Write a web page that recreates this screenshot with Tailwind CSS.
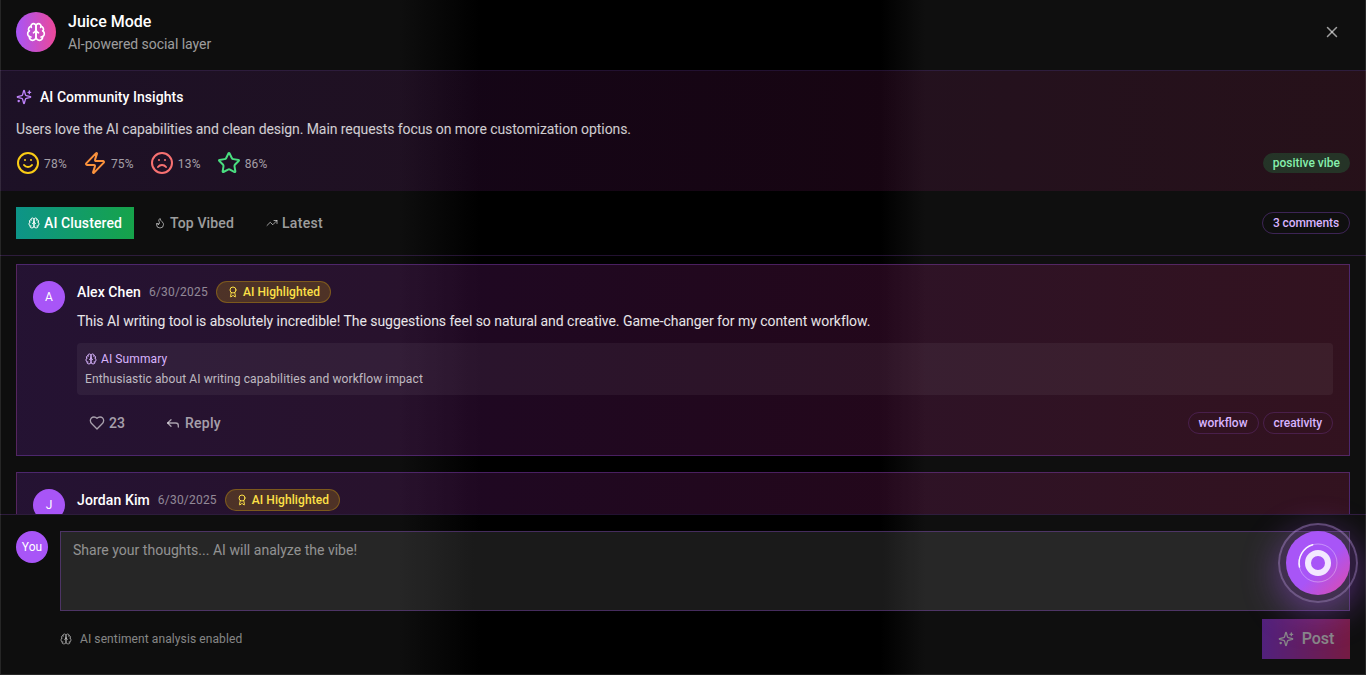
<!DOCTYPE html>
<html>
<head>
<meta charset="utf-8">
<script src="https://cdn.jsdelivr.net/npm/@tailwindcss/browser@4"></script>
</head>
<body class="m-0 bg-black">
<svg width="0" height="0" class="absolute">
  <defs>
    <symbol id="brain" viewBox="0 0 24 24"><path d="M12 5a3 3 0 1 0-5.997.125 4 4 0 0 0-2.526 5.77 4 4 0 0 0 .556 6.588A4 4 0 1 0 12 18Z"/><path d="M12 5a3 3 0 1 1 5.997.125 4 4 0 0 1 2.526 5.77 4 4 0 0 1-.556 6.588A4 4 0 1 1 12 18Z"/><path d="M15 13a4.5 4.5 0 0 1-3-4 4.5 4.5 0 0 1-3 4"/><path d="M17.599 6.5a3 3 0 0 0 .399-1.375"/><path d="M6.003 5.125A3 3 0 0 0 6.401 6.5"/><path d="M3.477 10.896a4 4 0 0 1 .585-.396"/><path d="M19.938 10.5a4 4 0 0 1 .585.396"/><path d="M6 18a4 4 0 0 1-1.967-.516"/><path d="M19.967 17.484A4 4 0 0 1 18 18"/></symbol>
    <symbol id="sparkles" viewBox="0 0 24 24"><path d="M9.937 15.5A2 2 0 0 0 8.5 14.063l-6.135-1.582a.5.5 0 0 1 0-.962L8.5 9.936A2 2 0 0 0 9.937 8.5l1.582-6.135a.5.5 0 0 1 .963 0L14.063 8.5A2 2 0 0 0 15.5 9.937l6.135 1.581a.5.5 0 0 1 0 .964L15.5 14.063a2 2 0 0 0-1.437 1.437l-1.582 6.135a.5.5 0 0 1-.963 0z"/><path d="M20 3v4"/><path d="M22 5h-4"/><path d="M4 17v2"/><path d="M5 18H3"/></symbol>
    <symbol id="award" viewBox="0 0 24 24"><path d="m15.477 12.89 1.515 8.526a.5.5 0 0 1-.81.47l-3.58-2.687a1 1 0 0 0-1.197 0l-3.586 2.686a.5.5 0 0 1-.81-.469l1.514-8.526"/><circle cx="12" cy="8" r="6"/></symbol>
  </defs>
</svg>

<div class="relative w-[1366px] h-[675px] overflow-hidden bg-[linear-gradient(90deg,#0e0e0e_0,#0e0e0e_400px,#000_480px,#000_880px,#0f0f0f_925px,#0f0f0f_100%)] text-white font-['Roboto',sans-serif] flex flex-col">

  <!-- Header -->
  <header class="flex items-center justify-between px-4 pt-3 pb-[18px] border-b border-[#a855f7]/20 shrink-0">
    <div class="flex items-center gap-3 h-10">
      <div class="w-10 h-10 rounded-full bg-linear-to-r/srgb from-[#a855f7] to-[#ec4899] flex items-center justify-center">
        <svg class="w-5 h-5" fill="none" stroke="white" stroke-width="2" stroke-linecap="round" stroke-linejoin="round"><use href="#brain"/></svg>
      </div>
      <div class="flex flex-col pb-px">
        <div class="text-base leading-6 font-medium">Juice Mode</div>
        <div class="text-sm leading-5 text-white/60 tracking-[-0.04px]">AI-powered social layer</div>
      </div>
    </div>
    <button class="w-[18px] h-[18px] mr-[9px] text-white/60">
      <svg class="w-[18px] h-[18px]" viewBox="0 0 24 24" fill="none" stroke="currentColor" stroke-width="2" stroke-linecap="round" stroke-linejoin="round"><path d="M18 6 6 18"/><path d="m6 6 12 12"/></svg>
    </button>
  </header>

  <!-- Insights -->
  <section class="p-4 bg-linear-to-r/srgb from-[#581c87]/20 to-[#831843]/20 shrink-0">
    <div class="flex items-center gap-2 mb-3 h-5">
      <svg class="w-4 h-4 text-[#c084fc]" fill="none" stroke="currentColor" stroke-width="2" stroke-linecap="round" stroke-linejoin="round"><use href="#sparkles"/></svg>
      <span class="text-sm leading-5 font-medium tracking-[0.05px]">AI Community Insights</span>
    </div>
    <p class="text-sm leading-5 text-white/80 mb-3 tracking-[-0.08px]">Users love the AI capabilities and clean design. Main requests focus on more customization options.</p>
    <div class="flex items-center justify-between h-6">
      <div class="flex items-center gap-4">
        <div class="flex items-center gap-1">
          <svg class="w-6 h-6 text-[#facc15]" viewBox="0 0 24 24" fill="none" stroke="currentColor" stroke-width="2" stroke-linecap="round" stroke-linejoin="round"><circle cx="12" cy="12" r="10"/><path d="M8 14s1.5 2 4 2 4-2 4-2"/><path d="M9 9h.01"/><path d="M15 9h.01"/></svg>
          <span class="text-xs text-white/60 tracking-[0.2px] mt-0.5">78%</span>
        </div>
        <div class="flex items-center gap-1">
          <svg class="w-6 h-6 text-[#fb923c]" viewBox="0 0 24 24" fill="none" stroke="currentColor" stroke-width="2" stroke-linecap="round" stroke-linejoin="round"><path d="M4 14a1 1 0 0 1-.78-1.63l9.9-10.2a.5.5 0 0 1 .86.46l-1.92 6.02A1 1 0 0 0 13 10h7a1 1 0 0 1 .78 1.63l-9.9 10.2a.5.5 0 0 1-.86-.46l1.92-6.02A1 1 0 0 0 11 14z"/></svg>
          <span class="text-xs text-white/60 tracking-[0.2px] mt-0.5">75%</span>
        </div>
        <div class="flex items-center gap-1">
          <svg class="w-6 h-6 text-[#f87171]" viewBox="0 0 24 24" fill="none" stroke="currentColor" stroke-width="2" stroke-linecap="round" stroke-linejoin="round"><circle cx="12" cy="12" r="10"/><path d="M16 16s-1.5-2-4-2-4 2-4 2"/><path d="M9 9h.01"/><path d="M15 9h.01"/></svg>
          <span class="text-xs text-white/60 tracking-[0.2px] mt-0.5">13%</span>
        </div>
        <div class="flex items-center gap-1">
          <svg class="w-6 h-6 text-[#4ade80]" viewBox="0 0 24 24" fill="none" stroke="currentColor" stroke-width="2" stroke-linecap="round" stroke-linejoin="round"><path d="M11.525 2.295a.53.53 0 0 1 .95 0l2.31 4.679a2.123 2.123 0 0 0 1.595 1.16l5.166.756a.53.53 0 0 1 .294.904l-3.736 3.638a2.123 2.123 0 0 0-.611 1.878l.882 5.14a.53.53 0 0 1-.771.56l-4.618-2.428a2.122 2.122 0 0 0-1.973 0L6.396 21.01a.53.53 0 0 1-.77-.56l.881-5.139a2.122 2.122 0 0 0-.611-1.879L2.16 9.795a.53.53 0 0 1 .294-.906l5.165-.755a2.122 2.122 0 0 0 1.597-1.16z"/></svg>
          <span class="text-xs text-white/60 tracking-[0.2px] mt-0.5">86%</span>
        </div>
      </div>
      <span class="rounded-full bg-[#22c55e]/20 text-[#86efac] text-xs leading-4 font-medium px-2.5 py-0.5">positive vibe</span>
    </div>
  </section>

  <!-- Tabs -->
  <nav class="flex items-center justify-between px-4 py-4 border-b border-[#a855f7]/20 shrink-0">
    <div class="flex items-center gap-2">
      <button class="h-8 px-3 flex items-center gap-1 text-sm font-medium text-white tracking-[0.1px] bg-linear-to-r/srgb from-[#0d9488] to-[#16a34a]">
        <svg class="w-3 h-3" fill="none" stroke="currentColor" stroke-width="2" stroke-linecap="round" stroke-linejoin="round"><use href="#brain"/></svg>
        AI Clustered
      </button>
      <button class="h-8 px-3 flex items-center gap-1 text-sm font-medium text-white/60 tracking-[0.14px]">
        <svg class="w-3 h-3" viewBox="0 0 24 24" fill="none" stroke="currentColor" stroke-width="2" stroke-linecap="round" stroke-linejoin="round"><path d="M8.5 14.5A2.5 2.5 0 0 0 11 12c0-1.38-.5-2-1-3-1.072-2.143-.224-4.054 2-6 .5 2.5 2 4.9 4 6.5 2 1.6 3 3.5 3 5.5a7 7 0 1 1-14 0c0-1.153.433-2.294 1-3a2.5 2.5 0 0 0 2.5 2.5z"/></svg>
        Top Vibed
      </button>
      <button class="h-8 px-3 flex items-center gap-1 text-sm font-medium text-white/60 tracking-[0.3px]">
        <svg class="w-3 h-3" viewBox="0 0 24 24" fill="none" stroke="currentColor" stroke-width="2" stroke-linecap="round" stroke-linejoin="round"><path d="M22 7 13.5 15.5 8.5 10.5 2 17"/><path d="M16 7h6v6"/></svg>
        Latest
      </button>
    </div>
    <span class="rounded-full border border-[#a855f7]/30 text-[#d8b4fe] text-xs leading-4 font-medium px-2.5 py-0.5 tracking-[-0.1px]">3 comments</span>
  </nav>

  <!-- Comments -->
  <main class="flex-1 min-h-0 overflow-hidden px-4 pt-2 flex flex-col gap-4">
    <article class="shrink-0 border border-[#a855f7]/30 bg-linear-to-r/srgb from-[#581c87]/30 to-[#831843]/30 p-4 flex gap-3">
      <div class="w-8 h-8 shrink-0 rounded-full bg-[#a855f7] flex items-center justify-center text-xs">A</div>
      <div class="flex-1 min-w-0">
        <div class="flex items-center gap-2 mb-2 h-[22px]">
          <span class="text-sm font-medium tracking-[0.1px]">Alex Chen</span>
          <span class="text-xs text-white/50 tracking-[0.2px]">6/30/2025</span>
          <span class="flex items-center gap-1 rounded-full border border-[#eab308]/30 bg-[#eab308]/20 text-[#fde047] text-xs leading-4 font-medium px-2.5 py-0.5 tracking-[0.08px]">
            <svg class="w-3 h-3" fill="none" stroke="currentColor" stroke-width="2" stroke-linecap="round" stroke-linejoin="round"><use href="#award"/></svg>
            AI Highlighted
          </span>
        </div>
        <p class="text-sm leading-5 text-white/90 mb-3 tracking-[-0.04px]">This AI writing tool is absolutely incredible! The suggestions feel so natural and creative. Game-changer for my content workflow.</p>
        <div class="rounded bg-white/5 p-2 mb-3">
          <div class="flex items-center gap-1 mb-1 text-xs leading-4 text-[#d8b4fe] tracking-[0.1px]">
            <svg class="w-3 h-3" fill="none" stroke="currentColor" stroke-width="2" stroke-linecap="round" stroke-linejoin="round"><use href="#brain"/></svg>
            AI Summary
          </div>
          <p class="text-xs leading-4 text-white/70 tracking-[0.11px]">Enthusiastic about AI writing capabilities and workflow impact</p>
        </div>
        <div class="flex items-center justify-between h-8">
          <div class="flex items-center gap-4">
            <button class="h-8 px-3 flex items-center gap-1 text-sm font-medium text-white/60">
              <svg class="w-4 h-4" viewBox="0 0 24 24" fill="none" stroke="currentColor" stroke-width="2" stroke-linecap="round" stroke-linejoin="round"><path d="M19 14c1.49-1.46 3-3.21 3-5.5A5.5 5.5 0 0 0 16.5 3c-1.76 0-3 .5-4.5 2-1.5-1.5-2.74-2-4.5-2A5.5 5.5 0 0 0 2 8.5c0 2.3 1.5 4.05 3 5.5l7 7Z"/></svg>
              23
            </button>
            <button class="h-8 px-3 flex items-center gap-1 text-sm font-medium text-white/60 tracking-[0.3px]">
              <svg class="w-4 h-4" viewBox="0 0 24 24" fill="none" stroke="currentColor" stroke-width="2" stroke-linecap="round" stroke-linejoin="round"><polyline points="9 17 4 12 9 7"/><path d="M20 18v-2a4 4 0 0 0-4-4H4"/></svg>
              Reply
            </button>
          </div>
          <div class="flex items-center gap-1">
            <span class="rounded-full border border-[#a855f7]/20 text-[#d8b4fe] text-xs leading-4 font-medium px-2.5 py-0.5">workflow</span>
            <span class="rounded-full border border-[#a855f7]/20 text-[#d8b4fe] text-xs leading-4 font-medium px-2.5 py-0.5 tracking-[-0.08px]">creativity</span>
          </div>
        </div>
      </div>
    </article>

    <article class="shrink-0 h-[192px] border border-[#a855f7]/30 bg-linear-to-r/srgb from-[#581c87]/30 to-[#831843]/30 p-4 flex gap-3">
      <div class="w-8 h-8 shrink-0 rounded-full bg-[#a855f7] flex items-center justify-center text-xs">J</div>
      <div class="flex-1 min-w-0">
        <div class="flex items-center gap-2 h-[22px]">
          <span class="text-sm font-medium tracking-[0.1px]">Jordan Kim</span>
          <span class="text-xs text-white/50 tracking-[0.2px]">6/30/2025</span>
          <span class="flex items-center gap-1 rounded-full border border-[#eab308]/30 bg-[#eab308]/20 text-[#fde047] text-xs leading-4 font-medium px-2.5 py-0.5 tracking-[0.08px]">
            <svg class="w-3 h-3" fill="none" stroke="currentColor" stroke-width="2" stroke-linecap="round" stroke-linejoin="round"><use href="#award"/></svg>
            AI Highlighted
          </span>
        </div>
      </div>
    </article>
  </main>

  <!-- Composer -->
  <footer class="relative shrink-0 border-t border-[#a855f7]/20 px-4 pt-4 pb-4 flex gap-3 bg-[linear-gradient(90deg,#0e0e0e_0,#0e0e0e_400px,#000_480px,#000_880px,#0f0f0f_925px,#0f0f0f_100%)]">
    <div class="w-8 h-8 shrink-0 rounded-full bg-[#a855f7] flex items-center justify-center text-xs">You</div>
    <div class="flex-1 min-w-0">
      <div class="h-20 border border-[#a855f7]/30 bg-white/10 px-3 py-2 text-sm leading-5 text-white/50 tracking-[0.02px]">Share your thoughts... AI will analyze the vibe!</div>
      <div class="mt-2 flex items-center justify-between">
        <div class="flex items-center gap-2 text-xs text-white/50 tracking-[0.1px]">
          <svg class="w-3 h-3" fill="none" stroke="currentColor" stroke-width="2" stroke-linecap="round" stroke-linejoin="round"><use href="#brain"/></svg>
          AI sentiment analysis enabled
        </div>
        <button class="h-10 w-[88px] justify-center flex items-center gap-2 text-base font-medium text-white bg-linear-to-r/srgb from-[#9333ea] to-[#db2777] opacity-50">
          <svg class="w-4 h-4" fill="none" stroke="currentColor" stroke-width="2" stroke-linecap="round" stroke-linejoin="round"><use href="#sparkles"/></svg>
          Post
        </button>
      </div>
    </div>
  </footer>

  <!-- Floating orb -->
  <div class="absolute left-[1278px] top-[523px] w-20 h-20 rounded-full border-2 border-[#d8b4fe]/30 bg-[#a855f7]/20 shadow-[0_10px_36px_rgba(168,85,247,0.45)]"></div>
  <div class="absolute left-[1286px] top-[531px] w-16 h-16 rounded-full bg-linear-to-br/srgb from-[#a855f7] from-55% to-[#ec4899] to-110% flex items-center justify-center">
    <svg class="w-16 h-16" viewBox="0 0 64 64" fill="none">
      <circle cx="32" cy="32" r="19" stroke="white" stroke-opacity="0.35" stroke-width="1"/>
      <path d="M26.7 13.8A19 19 0 0 0 13.5 36" stroke="white" stroke-opacity="0.9" stroke-width="1.5" stroke-linecap="round"/>
      <circle cx="32" cy="32" r="10" stroke="#f3e8ff" stroke-width="6"/>
    </svg>
  </div>

  <!-- Window border -->
  <div class="absolute inset-0 border-x border-b border-white/10 pointer-events-none"></div>
</div>
</body>
</html>
